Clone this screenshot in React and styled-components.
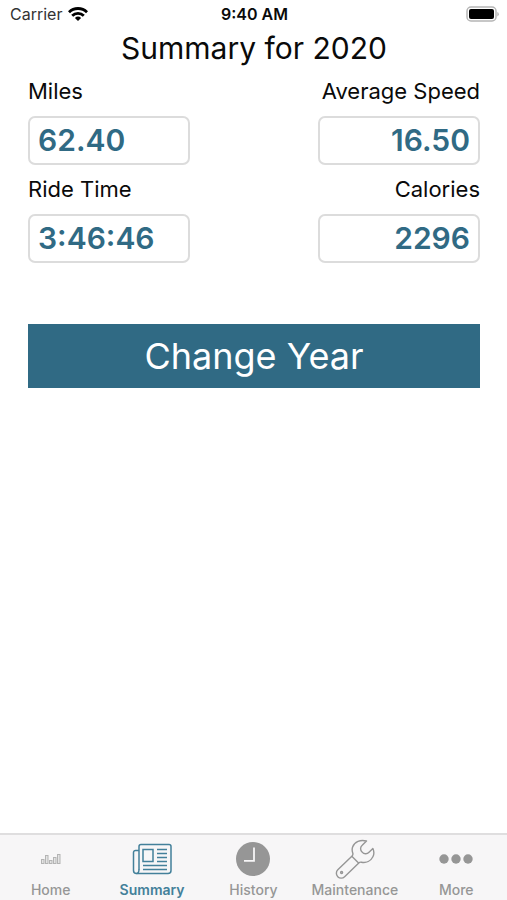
import React, { useState } from "react";
import styled, { createGlobalStyle } from "styled-components";

const stats = [
  { id: "miles", label: "Miles", value: "62.40" },
  { id: "speed", label: "Average Speed", value: "16.50", align: "right" },
  { id: "time", label: "Ride Time", value: "3:46:46" },
  { id: "calories", label: "Calories", value: "2296", align: "right" }
];

function WifiIcon() {
  return (
    <svg width="20" height="14" viewBox="0 0 20 14" aria-hidden="true">
      <g fill="none" stroke="#000" strokeWidth="2.8">
        <path d="M1 5.2a12.8 12.8 0 0 1 18 0" />
        <path d="M4.2 8.7a8.2 8.2 0 0 1 11.6 0" />
      </g>
      <path d="M6.9 11a4.5 4.5 0 0 1 6.2 0L10 14z" fill="#000" />
    </svg>
  );
}

function BatteryIcon() {
  return (
    <svg width="33" height="17" viewBox="0 0 33 17" aria-hidden="true">
      <rect
        x="1"
        y="1"
        width="29"
        height="14"
        rx="4"
        fill="#fff"
        stroke="#b5b5b5"
        strokeWidth="1.5"
      />
      <rect x="3" y="3" width="25" height="10" rx="2" fill="#000" />
      <path d="M31.3 6v4.4q1.5-.6 1.5-2.2T31.3 6z" fill="#b5b5b5" />
    </svg>
  );
}

function HomeIcon() {
  return (
    <svg width="20" height="40" viewBox="0 0 20 40" aria-hidden="true">
      <g fill="#e4e4e4" stroke="#b4b4b4" strokeWidth="1">
        <rect x="0.5" y="20.5" width="2.5" height="4" />
        <rect x="4.5" y="16.5" width="2.5" height="8" />
        <rect x="8.5" y="21.5" width="2.5" height="3" />
        <rect x="12.5" y="18.5" width="2.5" height="6" />
        <rect x="16.5" y="15.5" width="2.5" height="9" />
      </g>
    </svg>
  );
}

function SummaryIcon() {
  return (
    <svg width="40" height="40" viewBox="0 0 40 40" aria-hidden="true">
      <g fill="none" stroke="currentColor" strokeWidth="1.5">
        <path d="M7 30.5V7.5a2 2 0 0 1 2-2h28a2 2 0 0 1 2 2v24a3 3 0 0 1-3 3H4.5a3 3 0 0 1-3-3v-18a2 2 0 0 1 2-2H7" />
        <path d="M7 30q0 4.500-2.500 4.500" />
        <path d="M11 10.500h10v12H11z" />
        <path d="M25 10.500h10M25 14.500h10M25 18.500h10M25 22.500h10M11 26.500h24M11 30.500h24" />
      </g>
    </svg>
  );
}

function HistoryIcon() {
  return (
    <svg width="40" height="40" viewBox="0 0 40 40" aria-hidden="true">
      <circle cx="20" cy="20" r="17" fill="currentColor" />
      <path
        d="M21 8.5v13.3H11"
        fill="none"
        stroke="#f7f6f7"
        strokeWidth="1.8"
      />
    </svg>
  );
}

function MaintenanceIcon() {
  return (
    <svg width="40" height="40" viewBox="0 0 40 40" aria-hidden="true">
      <g
        fill="none"
        stroke="currentColor"
        strokeWidth="1.4"
        strokeLinejoin="round"
      >
        <path d="M31.500 2C25.500.4 19.500 2.500 17.600 8c-.7 2.200-.6 4.200.2 6.300.3 1 0 1.900-.7 2.600L2.800 30.800a4.800 4.800 0 0 0 6.800 6.900l14.200-13.800c.8-.7 1.700-.9 2.700-.7 4.800 1 9.300-1.200 11.400-5.400 1.300-2.700 1.300-5.500 0-8.300L34 13.300c-2 2.200-5 1.900-6.900-.2-2-2.100-2-5 .1-6.800z" />
        <path d="M16.800 17.200l6.800 6.800" />
        <circle cx="6.600" cy="33.500" r="1" />
      </g>
    </svg>
  );
}

function MoreIcon() {
  return (
    <svg width="40" height="40" viewBox="0 0 40 40" aria-hidden="true">
      <g fill="currentColor">
        <circle cx="8" cy="20" r="4.7" />
        <circle cx="20" cy="20" r="4.7" />
        <circle cx="32" cy="20" r="4.7" />
      </g>
    </svg>
  );
}

const tabs = [
  { name: "Home", icon: HomeIcon },
  { name: "Summary", icon: SummaryIcon },
  { name: "History", icon: HistoryIcon },
  { name: "Maintenance", icon: MaintenanceIcon },
  { name: "More", icon: MoreIcon }
];

function Stat({ stat }) {
  return (
    <StatContainer $align={stat.align}>
      <StatLabel htmlFor={stat.id}>{stat.label}</StatLabel>
      <StatInput
        id={stat.id}
        type="text"
        $align={stat.align}
        value={stat.value}
        readOnly
      />
    </StatContainer>
  );
}

function App() {
  const [current, setCurrent] = useState("Summary");

  return (
    <Screen>
      <GlobalStyle />
      <StatusBar>
        <Carrier>
          Carrier <WifiIcon />
        </Carrier>
        <Clock>9:40 AM</Clock>
        <Battery>
          <BatteryIcon />
        </Battery>
      </StatusBar>
      <Main>
        <Title>Summary for 2020</Title>
        <Stats>
          {stats.map(stat => (
            <Stat key={stat.id} stat={stat} />
          ))}
        </Stats>
        <ChangeButton type="button">Change Year</ChangeButton>
      </Main>
      <TabBar>
        {tabs.map(({ name, icon: Icon }) => (
          <Tab
            key={name}
            type="button"
            $active={name === current}
            onClick={() => setCurrent(name)}
          >
            <Icon />
            {name}
          </Tab>
        ))}
      </TabBar>
    </Screen>
  );
}

const GlobalStyle = createGlobalStyle`
  * {
    box-sizing: border-box;
  }

  body {
    margin: 0;
    background-color: #fff;
    font-family: Inter, "Liberation Sans", sans-serif;
    color: #0a0a0a;
  }

  button,
  input {
    font-family: inherit;
  }
`;

const Screen = styled.div`
  display: flex;
  flex-direction: column;
  min-height: 100vh;
`;

const StatusBar = styled.header`
  display: grid;
  grid-template-columns: 1fr auto 1fr;
  align-items: center;
  height: 28px;
  padding: 0 8px 0 10px;
  font-size: 16px;
`;

const Carrier = styled.div`
  display: flex;
  align-items: center;
  gap: 6px;
  color: #333;
`;

const Clock = styled.div`
  font-weight: 600;
`;

const Battery = styled.div`
  display: flex;
  justify-content: flex-end;
`;

const Main = styled.main`
  flex: 1;
  padding: 0 27px 0 28px;
`;

const Title = styled.h1`
  margin: 0;
  font-size: 30px;
  font-weight: 400;
  line-height: 40px;
  text-align: center;
`;

const Stats = styled.div`
  display: grid;
  grid-template-columns: 1fr 1fr;
  row-gap: 10px;
  margin-top: 9px;
`;

const StatContainer = styled.div`
  display: flex;
  flex-direction: column;
  align-items: ${({ $align }) =>
    $align === "right" ? "flex-end" : "flex-start"};
  gap: 11px;
`;

const StatLabel = styled.label`
  font-size: 22px;
  line-height: 28px;
`;

const StatInput = styled.input`
  width: 162px;
  height: 49px;
  padding: 0 8px 2px;
  border: 2px solid #dcdcdc;
  border-radius: 7px;
  background-color: #fff;
  color: #306a84;
  font-size: 30px;
  font-weight: 600;
  text-align: ${({ $align }) => $align || "left"};
`;

const ChangeButton = styled.button`
  display: block;
  width: 100%;
  height: 64px;
  margin-top: 61px;
  padding: 0;
  border: 0;
  background-color: #306a84;
  color: #fff;
  font-size: 36px;
  font-weight: 400;
`;

const TabBar = styled.nav`
  display: grid;
  grid-template-columns: repeat(5, 1fr);
  height: 67px;
  border-top: 2px solid #dfdedf;
  background-color: #f7f6f7;
`;

const Tab = styled.button`
  display: flex;
  flex-direction: column;
  align-items: center;
  gap: 3px;
  padding: 4px 0 0;
  border: 0;
  background: none;
  color: ${({ $active }) => ($active ? "#43809a" : "#969696")};
  font-size: 14px;
  font-weight: ${({ $active }) => ($active ? 600 : 500)};
  line-height: 16px;
`;

export default App;
